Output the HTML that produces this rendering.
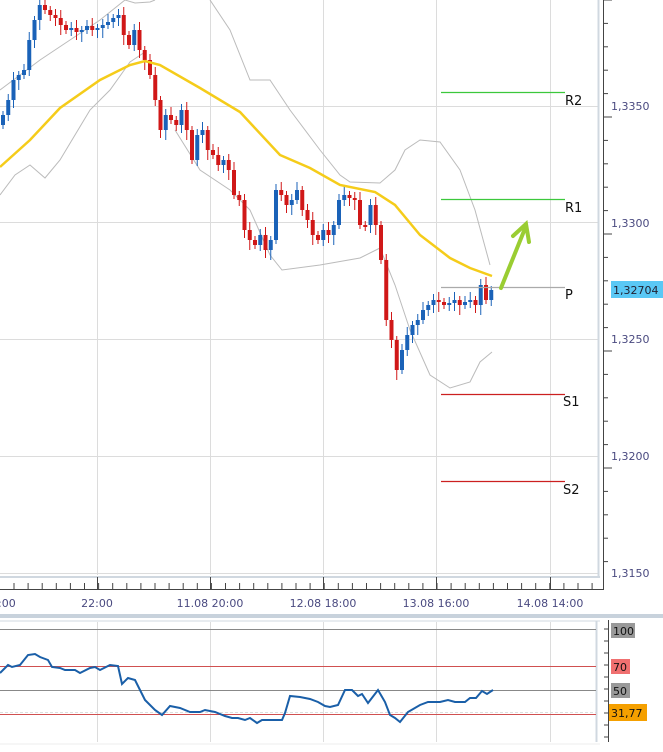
<!DOCTYPE html><html><head><style>
body{margin:0;background:#fff;width:663px;height:748px;overflow:hidden;font-family:"DejaVu Sans",Verdana,sans-serif}
svg text{font-family:"DejaVu Sans",Verdana,sans-serif}
</style></head><body>
<svg id="s" width="663" height="748" xmlns="http://www.w3.org/2000/svg">
<g stroke="#dcdcdc" stroke-width="1">
<line x1="0" y1="106.5" x2="598" y2="106.5"/><line x1="0" y1="222.5" x2="598" y2="222.5"/><line x1="0" y1="339.5" x2="598" y2="339.5"/><line x1="0" y1="456.5" x2="598" y2="456.5"/><line x1="0" y1="573.5" x2="598" y2="573.5"/>
<line x1="97.5" y1="0" x2="97.5" y2="575"/><line x1="210.5" y1="0" x2="210.5" y2="575"/><line x1="323.5" y1="0" x2="323.5" y2="575"/><line x1="436.5" y1="0" x2="436.5" y2="575"/><line x1="550.5" y1="0" x2="550.5" y2="575"/>
<line x1="97.5" y1="622" x2="97.5" y2="742"/><line x1="210.5" y1="622" x2="210.5" y2="742"/><line x1="323.5" y1="622" x2="323.5" y2="742"/><line x1="436.5" y1="622" x2="436.5" y2="742"/><line x1="550.5" y1="622" x2="550.5" y2="742"/>
</g>
<line x1="598.5" y1="0" x2="598.5" y2="578" stroke="#d0d8e0" stroke-width="2"/>
<line x1="0" y1="577" x2="600" y2="577" stroke="#d0d8e0" stroke-width="2"/>
<line x1="603.5" y1="0" x2="603.5" y2="590" stroke="#444"/>
<line x1="0" y1="589.5" x2="604" y2="589.5" stroke="#444"/>
<rect x="0" y="614" width="663" height="4" fill="#c8d2dc"/>
<line x1="0" y1="621" x2="600" y2="621" stroke="#d0d8e0"/>
<line x1="596.5" y1="621" x2="596.5" y2="742" stroke="#d0d8e0" stroke-width="2"/>
<line x1="608.5" y1="620" x2="608.5" y2="742" stroke="#444"/>
<line x1="0" y1="744" x2="600" y2="744" stroke="#eee"/>
<g id="ticks" stroke="#444"></g>
<polyline fill="none" stroke="#bbb" points="0,90 20,75 40,60 70,40 100,20 125,0"/>
<polyline fill="none" stroke="#bbb" points="125,0 135,3 150,2 155,0"/>
<polyline fill="none" stroke="#bbb" points="210,0 230,30 250,80 270,80 290,110 320,150 340,175 350,182 380,183 395,170 405,150 420,140 440,142 460,170 475,210 490,265"/>
<polyline fill="none" stroke="#bbb" points="0,195 15,175 30,165 45,178 60,160 90,110 110,90 130,62 145,52"/>
<polyline fill="none" stroke="#bbb" points="175,130 200,170 230,190 250,210 270,255 282,270 320,265 360,258 380,248 395,285 410,330 430,375 450,388 470,382 480,362 492,352"/>
<g id="candles"></g>
<polyline fill="none" stroke="#f5cc1a" stroke-width="2.5" points="0,167 30,140 60,108 100,80 130,65 145,61 160,65 200,88 240,112 280,155 310,168 340,185 375,192 395,205 420,235 450,258 470,268 492,276"/>
<g stroke-width="1.3">
<line x1="441" y1="92.5" x2="565" y2="92.5" stroke="#3cc83c"/>
<line x1="441" y1="199.5" x2="565" y2="199.5" stroke="#3cc83c"/>
<line x1="441" y1="287.5" x2="565" y2="287.5" stroke="#aaa"/>
<line x1="441" y1="394.5" x2="565" y2="394.5" stroke="#cc2020"/>
<line x1="441" y1="481.5" x2="565" y2="481.5" stroke="#cc2020"/>
</g>
<g font-size="13" fill="#111">
<text x="565" y="105">R2</text><text x="565" y="212">R1</text><text x="565" y="299">P</text><text x="563" y="406">S1</text><text x="563" y="494">S2</text>
</g>
<g stroke="#9acd32" stroke-width="4" fill="none" stroke-linecap="round">
<line x1="501" y1="288" x2="526" y2="226"/><polyline points="513,236 526,224 529,242"/>
</g>
<g font-size="11" fill="#4a4a80">
<text x="611" y="110">1,3350</text><text x="611" y="227">1,3300</text><text x="611" y="343">1,3250</text><text x="611" y="460">1,3200</text><text x="611" y="577">1,3150</text>
<text x="-2" y="607">:00</text>
<g text-anchor="middle"><text x="97" y="607">22:00</text><text x="210" y="607">11.08 20:00</text><text x="323" y="607">12.08 18:00</text><text x="436" y="607">13.08 16:00</text><text x="550" y="607">14.08 14:00</text></g>
</g>
<rect x="611" y="281" width="52" height="17" fill="#5ac8f5"/>
<text x="613" y="294" font-size="11" fill="#223">1,32704</text>
<line x1="0" y1="629.5" x2="596" y2="629.5" stroke="#888"/>
<line x1="0" y1="666.5" x2="596" y2="666.5" stroke="#d05050"/>
<line x1="0" y1="690.5" x2="596" y2="690.5" stroke="#888"/>
<line x1="0" y1="714.5" x2="596" y2="714.5" stroke="#d05050"/>
<line x1="0" y1="712.5" x2="596" y2="712.5" stroke="#ddd" stroke-dasharray="3,2"/>
<polyline fill="none" stroke="#1a5fa8" stroke-width="2" points="0,673 8,665 12,667 20,665 28,655 35,654 40,657 48,660 52,667 60,668 65,670 75,670 80,673 90,668 95,667 100,670 110,665 118,666 122,684 128,678 135,680 145,700 155,710 162,715 170,706 180,708 190,712 200,712 205,710 215,712 225,716 232,718 238,718 245,720 250,718 257,723 262,720 272,720 282,720 285,713 290,696 300,697 310,699 318,702 325,706 330,707 338,705 345,690 352,690 358,696 362,694 368,703 378,690 385,702 390,715 395,718 400,722 408,712 420,705 428,702 440,702 448,700 455,702 465,702 470,698 476,698 482,691 487,694 493,690"/>
<rect x="611" y="623" width="24" height="15" fill="#999"/><text x="613" y="635" font-size="11" fill="#111">100</text>
<rect x="611" y="659" width="19" height="15" fill="#f07070"/><text x="613" y="671" font-size="11" fill="#111">70</text>
<rect x="611" y="683" width="19" height="15" fill="#999"/><text x="613" y="695" font-size="11" fill="#111">50</text>
<rect x="609" y="704" width="38" height="17" fill="#f5a000"/><text x="611" y="717" font-size="11" fill="#111">31,77</text>
</svg>
<script>
var ns="http://www.w3.org/2000/svg";
var g=document.getElementById("candles");
var c=[115,100,80,75,70,40,20,5,10,15,18,25,30,28,32,30,26,30,28,25,22,18,15,35,45,30,50,60,75,100,130,115,120,125,110,130,160,135,130,150,155,165,160,170,195,200,230,240,245,235,250,240,190,195,205,200,190,210,220,235,240,230,235,225,200,195,198,200,225,225,205,225,260,320,340,370,350,335,325,320,310,305,300,302,305,303,300,305,302,300,305,285,300,290];
var prev=125;
function el(n,a){var e=document.createElementNS(ns,n);for(var k in a)e.setAttribute(k,a[k]);g.appendChild(e);}
for(var i=0;i<c.length;i++){
var x=3+5.25*i,o=prev,cl=c[i];var col=cl<o?"#1a62b8":"#d01818";
var t=Math.min(o,cl)-4-(i%3)*2,b=Math.max(o,cl)+4+(i%4)*2;
el("line",{x1:x,x2:x,y1:t,y2:b,stroke:col,"stroke-width":1});
var h=Math.max(Math.abs(o-cl),2);
el("rect",{x:x-2,y:Math.min(o,cl),width:4,height:h,fill:col});
prev=cl;}
var tk=document.getElementById("ticks");
for(var y=0;y<580;y+=23.4){var l=document.createElementNS(ns,"line");var L=(Math.round(y)%117<5)?8:4;l.setAttribute("x1",604);l.setAttribute("x2",604+L);l.setAttribute("y1",y);l.setAttribute("y2",y);tk.appendChild(l);}
for(var x=14;x<600;x+=14.1){var l=document.createElementNS(ns,"line");l.setAttribute("x1",x);l.setAttribute("x2",x);l.setAttribute("y1",589);l.setAttribute("y2",583);tk.appendChild(l);}
[97,210,323,436,550].forEach(function(x){var l=document.createElementNS(ns,"line");l.setAttribute("x1",x+.5);l.setAttribute("x2",x+.5);l.setAttribute("y1",589);l.setAttribute("y2",577);tk.appendChild(l);});
for(var y=629;y<742;y+=12){var l=document.createElementNS(ns,"line");l.setAttribute("x1",604);l.setAttribute("x2",609);l.setAttribute("y1",y);l.setAttribute("y2",y);tk.appendChild(l);}
</script>
</body></html>
